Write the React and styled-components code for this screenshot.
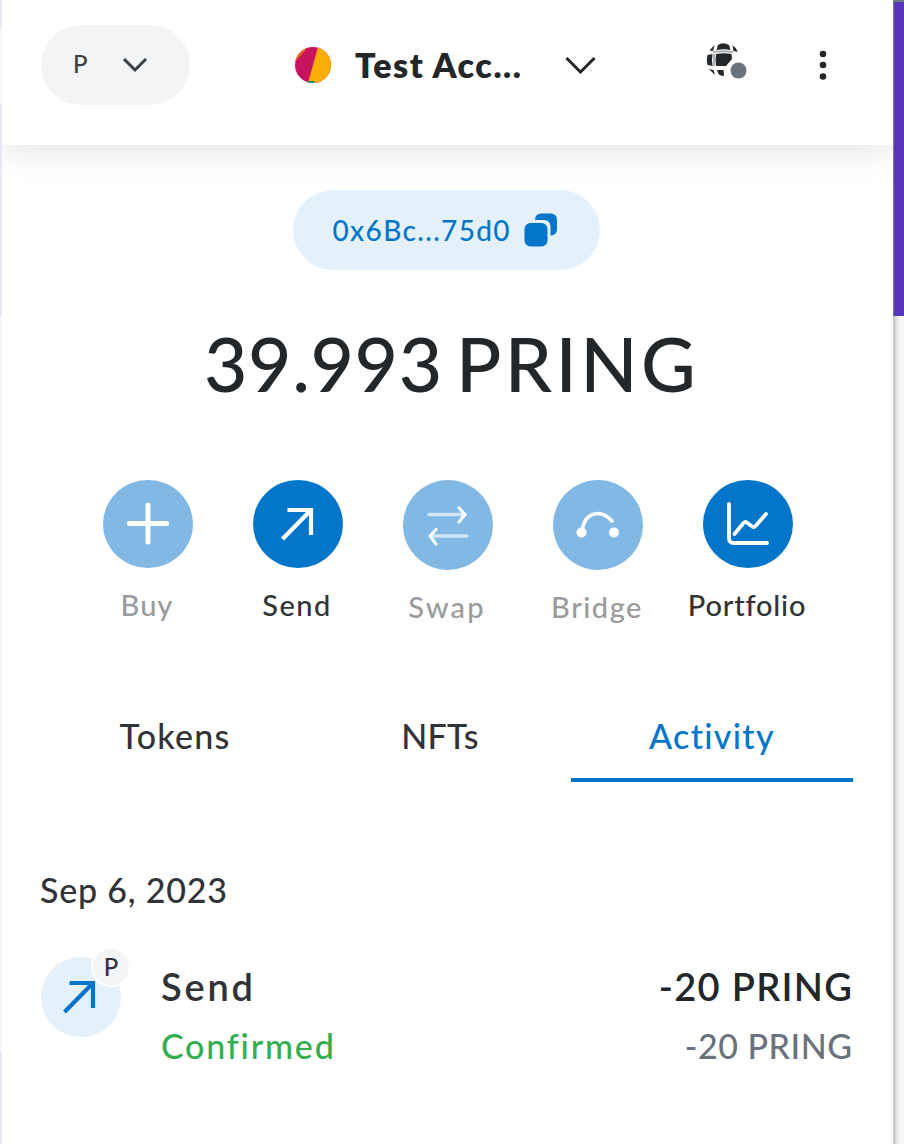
import React from 'react';
import styled, { createGlobalStyle } from 'styled-components';

const GlobalStyle = createGlobalStyle`
  *, *::before, *::after { box-sizing: border-box; }
  body { margin: 0; background: #f4f4f6; }
  button { border: 0; padding: 0; background: none; font: inherit; color: inherit; }
`;

const Screen = styled.div`
  display: grid;
  grid-template-columns: 2px 891px 11px;
  width: 904px;
  height: 1144px;
  overflow: hidden;
  font-family: Lato, "Open Sans", sans-serif;
  font-variant-ligatures: none;
  color: #24272a;
`;

const LeftEdge = styled.div`
  background: linear-gradient(#e9e8f5 0 28px, #f8f8fa 28px 103px, #e9e8f5 103px 316px, #f5f5fb 316px 1052px, #e9e8f5 1052px);
`;

const RightEdge = styled.div`
  display: grid;
  grid-template-rows: 2px 314px 1fr;
`;

const PageTop = styled.div`
  background: #6b7b80;
`;

const PageBanner = styled.div`
  background: linear-gradient(90deg, #8b83a8 0, #4e35a2 2px, #5835bd 4px);
`;

const PageRest = styled.div`
  background: linear-gradient(90deg, #c9cccd 0 2px, #e9e9ec 4px, #f5f5f7 8px);
`;

const Wallet = styled.main`
  display: flex;
  flex-direction: column;
  background: #fff;
  overflow: hidden;
`;

const Header = styled.header`
  display: flex;
  align-items: flex-start;
  flex: none;
  height: 145px;
  padding: 25px 0 0 39px;
  background: #fff;
  box-shadow: 0 4px 34px rgba(0, 0, 0, 0.12);
`;

const NetworkPicker = styled.button`
  display: flex;
  align-items: center;
  width: 149px;
  height: 80px;
  padding-left: 32px;
  border-radius: 40px;
  background: #f2f4f6;
`;

const Text = styled.span`
  display: block;
  white-space: pre;
  font-size: ${(p) => p.$size}px;
  line-height: ${(p) => p.$line || 40}px;
  font-weight: ${(p) => p.$weight || 500};
  letter-spacing: ${(p) => p.$track || 0}px;
  color: ${(p) => p.$color || '#303337'};
`;

const NetworkName = styled(Text)`
  margin-bottom: 2px;
`;

const NetworkChevron = styled.svg`
  margin-left: 34px;
`;

const AccountPicker = styled.button`
  display: flex;
  align-items: center;
  height: 80px;
  margin-left: 105px;
`;

const AccountName = styled(Text)`
  width: 234px;
  padding-left: 24px;
  text-align: left;
`;

const HeaderIcons = styled.div`
  display: flex;
  align-items: center;
  height: 80px;
  margin-left: 110px;
  gap: 71px;
`;

const NetworkStatus = styled.svg`
  margin-bottom: 8px;
`;

const AddressRow = styled.div`
  display: flex;
  justify-content: center;
  margin: 45px 3px 0 0;
`;

const AddressPill = styled.button`
  display: flex;
  align-items: center;
  width: 307px;
  height: 80px;
  padding-left: 40px;
  border-radius: 40px;
  background: #e5f1fa;
`;

const AddressText = styled(Text)`
  width: 191px;
  text-align: left;
`;

const Balance = styled.div`
  display: flex;
  margin: 48px 0 0 202px;
  height: 92px;
`;

const Amount = styled(Text)`
  width: 252px;
`;

const Actions = styled.div`
  display: flex;
  margin: 70px 0 0 71px;
  height: 150px;
`;

const Action = styled.button`
  display: flex;
  flex-direction: column;
  align-items: center;
  justify-content: flex-start;
  width: 150px;
`;

const ActionLabel = styled(Text)`
  margin-right: 2px;
`;

const ActionDisc = styled.span`
  display: flex;
  align-items: center;
  justify-content: center;
  width: 90px;
  height: ${(p) => (p.$tall ? 90 : 88)}px;
  margin-bottom: 17px;
  border-radius: 50%;
  background: ${(p) => (p.$muted ? '#82b9e4' : '#0376c9')};
`;

const Tabs = styled.nav`
  display: grid;
  grid-template-columns: 268px 262px 282px;
  margin: 73px 0 0 39px;
  height: 79px;
`;

const Tab = styled.button`
  display: flex;
  justify-content: center;
  align-items: flex-start;
  padding-top: 13px;
  border-bottom: ${(p) => (p.$active ? '4px solid #0376c9' : '0')};
`;

const DateHeading = styled.div`
  margin: 88px 0 0 38px;
`;

const ActivityItem = styled.section`
  display: flex;
  width: 811px;
  height: 110px;
  margin: 46px 0 0 39px;
`;

const ActivityIcon = styled.div`
  position: relative;
  display: flex;
  align-items: center;
  justify-content: center;
  width: 80px;
  height: 80px;
  margin-top: 1px;
  padding-right: 2px;
  border-radius: 50%;
  background: #e5f1fa;
`;

const NetworkBadge = styled.span`
  position: absolute;
  top: -10px;
  right: -10px;
  display: flex;
  align-items: center;
  justify-content: center;
  width: 40px;
  height: 40px;
  border: 2px solid #fff;
  border-radius: 50%;
  background: #f2f4f6;
`;

const ActivityText = styled.div`
  flex: 1;
  padding-left: 40px;
`;

const ActivityAmounts = styled.div`
  display: flex;
  flex-direction: column;
  align-items: flex-end;
`;

const AmountLine = styled(Text)`
  margin-right: ${(p) => -p.$track}px;
`;

const SendArrow = ({ color, size = 36, width = 4.2 }) => (
  <svg width={size} height={size} viewBox="0 0 36 36" fill="none" stroke={color} strokeWidth={width}>
    <path d="M7.500 4h23.500v25M30 5 2.500 33" />
  </svg>
);

const PlusIcon = () => (
  <svg width="44" height="44" viewBox="0 0 44 44" stroke="#fff" strokeWidth="5" strokeLinecap="round">
    <path d="M22 3v37M3.500 21.500h37" />
  </svg>
);

const SwapIcon = () => (
  <svg width="44" height="44" viewBox="0 0 44 44" fill="none" stroke="#fff" strokeLinecap="round" strokeLinejoin="round">
    <path d="M3 11.500h36M5 33h36" strokeWidth="3.600" opacity="0.65" />
    <path d="m33 5 6 6.500-6 7.500M10 26.500 4 33l6 8" strokeWidth="3.200" opacity="0.9" />
  </svg>
);

const BridgeIcon = () => (
  <svg width="44" height="44" viewBox="0 0 44 44" fill="none">
    <path d="M6 29C8 8 25 6 36 18" stroke="#fff" strokeWidth="3.600" strokeLinecap="round" />
    <circle cx="5.500" cy="29.500" r="5" fill="#fff" />
    <circle cx="38" cy="29.500" r="5" fill="#fff" />
  </svg>
);

const ChartIcon = () => (
  <svg width="46" height="46" viewBox="0 0 46 46" fill="none" stroke="#fff" strokeWidth="3.800" strokeLinecap="round" strokeLinejoin="round">
    <path d="M4 3v34q0 5 5 5h33" />
    <path d="m9.500 33 9-11q2-2 4 0l4 3q2 2 4 0L41 13" />
  </svg>
);

const GlobeIcon = () => (
  <NetworkStatus width="42" height="42" viewBox="0 0 42 42">
    <g fill="#24272a">
      <path d="M12 5q5-3.500 11 0l1.500 5q-7-1.500-14 0z" />
      <path d="M3.500 10.500 8.500 5 7 11zM26.500 5.500q4 2 5 6.500l-4-1z" />
      <path d="M1.500 15 6.500 14q-1 6 0 12l-5-1q-1.500-5 0-10z" />
      <path d="M10 14q8-1.500 15.500 0l.5 5-6 7h-10q-1-6 0-12z" />
      <path d="m3 29 4.500 1L9 35zM11 30h6.500l.5 6q-4 0-5.500-2z" />
    </g>
    <path d="M7 12.200q9-2 20 0M8 14v12" fill="none" stroke="#8b8d90" strokeWidth="2" opacity="0.7" />
    <circle cx="32.500" cy="30.500" r="8" fill="#6a737d" />
  </NetworkStatus>
);

const CopyIcon = () => (
  <svg width="34" height="34" viewBox="0 0 34 34" fill="#0376c9">
    <path d="M11 7Q11 .500 17.500.500h9Q33 .500 33 7v9q0 6-6.500 6.500V14q0-7-7-7z" />
    <rect x="0.500" y="10" width="23" height="23.500" rx="6" />
  </svg>
);

const Avatar = () => (
  <svg width="36" height="36" viewBox="0 0 36 36">
    <defs>
      <clipPath id="avatar"><circle cx="18" cy="18" r="18" /></clipPath>
    </defs>
    <g clipPath="url(#avatar)">
      <path fill="#c8145f" d="M0 0h36v36H0z" />
      <path fill="#f9ad05" d="M23 0h13v36H13z" />
      <path fill="#ee671c" d="M0 0h13L0 15z" />
      <path fill="#188b73" d="M12 34h7v3h-7z" />
    </g>
  </svg>
);

const actions = [
  { label: 'Buy', icon: <PlusIcon />, muted: true, track: 1 },
  { label: 'Send', icon: <SendArrow color="#fff" />, track: 1.5 },
  { label: 'Swap', icon: <SwapIcon />, muted: true, tall: true, track: 2.2 },
  { label: 'Bridge', icon: <BridgeIcon />, muted: true, tall: true, track: 1.5 },
  { label: 'Portfolio', icon: <ChartIcon />, track: 0.8 },
];

export default function App() {
  return (
    <>
      <GlobalStyle />
      <Screen>
        <LeftEdge />
        <Wallet>
          <Header>
            <NetworkPicker>
              <NetworkName $size={24} $color="#3c4044">P</NetworkName>
              <NetworkChevron width="26" height="16" viewBox="0 0 26 16" fill="none" stroke="#3c4044" strokeWidth="3">
                <path d="m2 2 11 11L24 2" />
              </NetworkChevron>
            </NetworkPicker>
            <AccountPicker>
              <Avatar />
              <AccountName $size={34} $weight={800} $track={1.5} $color="#24272a">Test Acc...</AccountName>
              <svg width="31" height="18" viewBox="0 0 31 18" fill="none" stroke="#24272a" strokeWidth="3">
                <path d="m1.500 2 14 14 14-14" />
              </svg>
            </AccountPicker>
            <HeaderIcons>
              <GlobeIcon />
              <svg width="8" height="32" viewBox="0 0 8 32" fill="#24272a">
                <circle cx="4" cy="5" r="3.300" />
                <circle cx="4" cy="16" r="3.300" />
                <circle cx="4" cy="27.500" r="3.300" />
              </svg>
            </HeaderIcons>
          </Header>
          <AddressRow>
            <AddressPill>
              <AddressText $size={28} $track={1.35} $color="#0376c9">0x6Bc...75d0</AddressText>
              <CopyIcon />
            </AddressPill>
          </AddressRow>
          <Balance>
            <Amount $size={75} $line={90} $track={0.6} $color="#24272a">39.993</Amount>
            <Text $size={75} $line={90} $track={3.4} $color="#24272a">PRING</Text>
          </Balance>
          <Actions>
            {actions.map((a) => (
              <Action key={a.label}>
                <ActionDisc $muted={a.muted} $tall={a.tall}>{a.icon}</ActionDisc>
                <ActionLabel $size={29} $track={a.track} $color={a.muted ? '#999b9d' : '#303337'}>{a.label}</ActionLabel>
              </Action>
            ))}
          </Actions>
          <Tabs>
            <Tab><Text $size={34} $track={1.2}>Tokens</Text></Tab>
            <Tab><Text $size={34} $track={0.3}>NFTs</Text></Tab>
            <Tab $active><Text $size={34} $track={1.3} $color="#0376c9">Activity</Text></Tab>
          </Tabs>
          <DateHeading><Text $size={34} $track={0.8}>Sep 6, 2023</Text></DateHeading>
          <ActivityItem>
            <ActivityIcon>
              <SendArrow color="#0376c9" />
              <NetworkBadge><Text $size={24}>P</Text></NetworkBadge>
            </ActivityIcon>
            <ActivityText>
              <Text $size={38} $weight={600} $line={60} $track={2.8}>Send</Text>
              <Text $size={34} $line={60} $track={1.8} $color="#32ae50">Confirmed</Text>
            </ActivityText>
            <ActivityAmounts>
              <AmountLine $size={38} $weight={600} $line={60} $track={1.3} $color="#24272a">-20 PRING</AmountLine>
              <AmountLine $size={34} $line={60} $track={0.5} $color="#6a737d">-20 PRING</AmountLine>
            </ActivityAmounts>
          </ActivityItem>
        </Wallet>
        <RightEdge>
          <PageTop />
          <PageBanner />
          <PageRest />
        </RightEdge>
      </Screen>
    </>
  );
}
